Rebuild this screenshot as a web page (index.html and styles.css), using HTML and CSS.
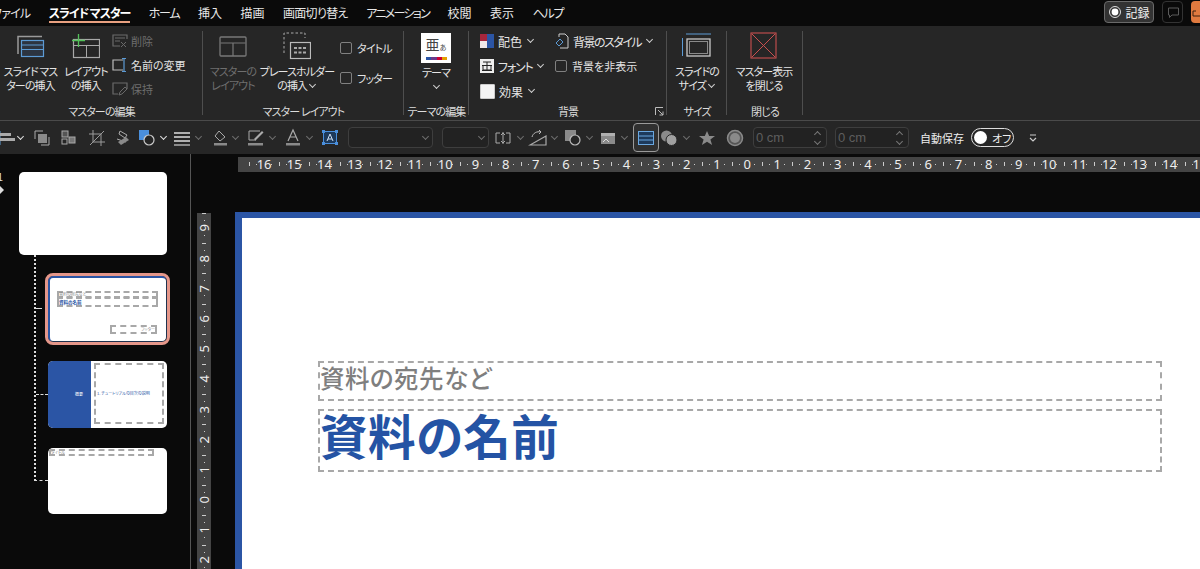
FILE: index.html
```html
<!DOCTYPE html>
<html lang="ja">
<head>
<meta charset="utf-8">
<title>スライド マスター</title>
<link rel="stylesheet" href="styles.css">
</head>
<body>
<div class="app">
  <header class="tabbar">
    <nav class="tabs">
      <span class="tab k0">ファイル</span><span class="tab active">スライド マスター</span><span class="tab k">ホーム</span><span class="tab">挿入</span><span class="tab">描画</span><span class="tab k2">画面切り替え</span><span class="tab k3">アニメーション</span><span class="tab">校閲</span><span class="tab">表示</span><span class="tab k">ヘルプ</span>
    </nav>
    <div class="tabactions">
      <span class="recbtn"><svg class="rec" width="14" height="14" viewBox="0 0 14 14"><circle cx="7" cy="7" r="5.5" fill="none" stroke="#ddd"/><circle cx="7" cy="7" r="3.4" fill="#fff"/></svg>記録</span>
      <span class="cmtbtn"><svg width="14" height="14" viewBox="0 0 14 14"><path d="M2.5 3h10v7H6l-2.5 2.5V10h-1z" fill="none" stroke="#5a5a5a"/></svg></span>
      <span class="sharebtn"><svg width="10" height="12" viewBox="0 0 10 12"><path d="M1 10V5h3M1 10h8" fill="none" stroke="#3a2010"/></svg></span>
    </div>
  </header>

  <section class="ribbon">
    <div class="group g1">
      <div class="gbody">
        <div class="big w52"><svg width="28" height="24" viewBox="0 0 28 24"><path d="M1 20V2.500h24" fill="none" stroke="#9a9a9a" stroke-width="1.500"/><rect x="4.500" y="6.500" width="22" height="16" fill="#2c3440" stroke="#5c9bd5" stroke-width="1.200"/><path d="M5 11h21M5 15.500h21" stroke="#5c9bd5"/></svg><span class="lbl">スライド マス<br>ターの挿入</span></div>
        <div class="big w56"><svg width="28" height="24" viewBox="0 0 28 24"><rect x="1.500" y="5.500" width="26" height="18" fill="none" stroke="#a8a8a8" stroke-width="1.200"/><path d="M2 11.500h25M14.500 12v11" stroke="#a8a8a8"/><path d="M6.500 0v13M0 6.500h13" stroke="#54c15a" stroke-width="1.300"/></svg><span class="lbl">レイアウト<br>の挿入</span></div>
        <div class="smallcol">
          <div class="sm dis"><svg width="16" height="14" viewBox="0 0 16 14"><path d="M15 5V1H1v11h7M3 4h10M3 7h5" fill="none" stroke="#6a6a6a" stroke-width="1.200"/><path d="M9 8l5 5M14 8l-5 5" stroke="#6a6a6a"/></svg>削除</div>
          <div class="sm"><svg width="16" height="14" viewBox="0 0 16 14"><path d="M11 2H1v10h10" fill="none" stroke="#bbb" stroke-width="1.200"/><path d="M12 0v14M10 .5h4M10 13.500h4" stroke="#5c9bd5" stroke-width="1.200" fill="none"/></svg>名前の変更</div>
          <div class="sm dis"><svg width="16" height="14" viewBox="0 0 16 14"><path d="M15 7V1H1v11h5" fill="none" stroke="#6a6a6a" stroke-width="1.200"/><path d="M7 13l1-3 5-5 2 2-5 5z" fill="none" stroke="#6a6a6a"/></svg>保持</div>
        </div>
      </div>
      <div class="gtitle">マスターの編集</div>
    </div>

    <div class="group g2">
      <div class="gbody">
        <div class="big w44 dis"><svg width="28" height="24" viewBox="0 0 28 24"><rect x="1" y="3" width="26" height="19" rx="1" fill="none" stroke="#787878" stroke-width="1.300"/><path d="M1.500 9h25M14 9v13" stroke="#787878" stroke-width="1.200"/></svg><span class="lbl">マスターの<br>レイアウト</span></div>
        <div class="big w72"><svg width="28" height="28" viewBox="0 0 28 28"><path d="M1 21V1h21v5" fill="none" stroke="#aaa" stroke-dasharray="2.500 2"/><rect x="7.500" y="10.500" width="20" height="16" fill="#2a2a2a" stroke="#bbb" stroke-width="1.200"/><path d="M11 15h3v2h-3zM15.500 15h3v2h-3zM20 15h3v2h-3zM11 19.500h3v2h-3zM15.500 19.500h3v2h-3zM20 19.500h3v2h-3z" fill="#aaa"/></svg><span class="lbl">プレースホルダー<br>の挿入 <i class="chev"></i></span></div>
        <div class="checks">
          <div class="ck"><span class="box"></span>タイトル</div>
          <div class="ck"><span class="box"></span>フッター</div>
        </div>
      </div>
      <div class="gtitle">マスター レイアウト</div>
    </div>

    <div class="group g3">
      <div class="gbody">
        <div class="big w64"><span class="theme"><span class="ja">亜<small>あ</small></span><span class="swatch"></span></span><span class="lbl">テーマ<br><i class="chev"></i></span></div>
      </div>
      <div class="gtitle">テーマの編集</div>
    </div>

    <div class="group g4">
      <div class="gbody bg">
        <div class="bgcol first">
          <div class="sm2"><span class="palette"></span>配色 <i class="chev"></i></div>
          <div class="sm2 ks"><svg class="fontic" width="14" height="14" viewBox="0 0 14 14"><rect width="14" height="14" fill="#eee"/><path d="M3 3h8M2 6.500h10M3 6.500v4.500h8V6.500M7 3v8M2 11.500h10" fill="none" stroke="#222"/></svg>フォント <i class="chev"></i></div>
          <div class="sm2"><span class="effect"></span>効果 <i class="chev"></i></div>
        </div>
        <div class="bgcol">
          <div class="sm2 ks2"><svg width="14" height="16" viewBox="0 0 14 16"><path d="M4 4V1h6l3 3v11H5" fill="none" stroke="#ccc"/><path d="M5 6L1 10l3 3 4-4z" fill="none" stroke="#5c9bd5"/></svg>背景のスタイル <i class="chev"></i></div>
          <div class="ck nar"><span class="box"></span>背景を非表示</div>
        </div>
      </div>
      <div class="gtitle">背景<svg class="launcher" width="9" height="9" viewBox="0 0 9 9"><path d="M.5 8V.5H8M3 3l5 5M8 4.500V8H4.500" fill="none" stroke="#bbb"/></svg></div>
    </div>

    <div class="group g5">
      <div class="gbody">
        <div class="big w58"><svg width="30" height="26" viewBox="0 0 30 26"><rect x="5" y="6" width="23" height="17" fill="none" stroke="#c8c8c8" stroke-width="1.300"/><rect x="7.500" y="8.500" width="18" height="12" fill="none" stroke="#8a8a8a"/><path d="M4 1h25M.5 5v18" stroke="#5c9bd5" fill="none"/></svg><span class="lbl">スライドの<br>サイズ <i class="chev"></i></span></div>
      </div>
      <div class="gtitle">サイズ</div>
    </div>

    <div class="group g6">
      <div class="gbody">
        <div class="big w74"><svg width="28" height="28" viewBox="0 0 28 28"><rect x="1" y="1" width="25" height="25" fill="none" stroke="#c94f4f" stroke-width="1.100"/><path d="M2 2l23 23M25 2L2 25" stroke="#c94f4f"/></svg><span class="lbl">マスター表示<br>を閉じる</span></div>
      </div>
      <div class="gtitle">閉じる</div>
    </div>
  </section>

  <section class="toolbar">
    <svg class="i" width="20" height="20" viewBox="0 0 20 20"><path d="M5 3v14" stroke="#5c9bd5"/><rect x="5" y="5" width="11" height="3" fill="#aaa"/><rect x="5" y="10" width="15" height="3" fill="#aaa"/></svg>
    <i class="c m1 br"></i>
    <svg class="i m8" width="20" height="20" viewBox="0 0 20 20"><path d="M3 11V3h8" fill="none" stroke="#aaa"/><rect x="6" y="6" width="9" height="9" fill="#8a8a8a"/><path d="M9 17h8V9" fill="none" stroke="#aaa"/></svg>
    <svg class="i m7" width="20" height="20" viewBox="0 0 20 20"><rect x="3" y="3" width="6" height="6" fill="#555" stroke="#aaa"/><rect x="10" y="9" width="6" height="6" fill="#777" stroke="#aaa"/><rect x="3" y="11" width="5" height="5" fill="none" stroke="#aaa"/></svg>
    <svg class="i m8" width="20" height="20" viewBox="0 0 20 20"><path d="M6 2v12h12M2 6h12v12M3 17L17 3" fill="none" stroke="#9a9a9a"/></svg>
    <svg class="i m6" width="20" height="20" viewBox="0 0 20 20"><path d="M7 3l7 4-2 3-6-4zM4 11l9 3" fill="none" stroke="#aaa"/><path d="M5 14l8-5 3 3-8 5z" fill="#8a8a8a"/></svg>
    <svg class="i m4" width="20" height="20" viewBox="0 0 20 20"><rect x="2" y="2" width="10" height="10" fill="#4a8fdc"/><circle cx="12" cy="12" r="5" fill="#262626" stroke="#ccc" stroke-width="1.200"/></svg>
    <i class="c m2 br"></i>
    <svg class="i m5" width="20" height="20" viewBox="0 0 20 20"><path d="M2 4h16v2H2zM2 8h16v2H2zM2 12h16v2H2z" fill="#b0b0b0"/><path d="M2 16h16v2H2z" fill="#8a8a8a"/></svg>
    <i class="c m2"></i>
    <svg class="i m8" width="20" height="20" viewBox="0 0 20 20"><path d="M9 3l6 6-5 4-5-5z" fill="none" stroke="#aaa"/><path d="M4 15h13v2.500H4z" fill="#8a8a8a"/></svg>
    <i class="c m1"></i>
    <svg class="i m7" width="20" height="20" viewBox="0 0 20 20"><path d="M3 3h11M3 3v9h7" fill="none" stroke="#aaa"/><path d="M8 11l8-8 1.500 1.500-8 8z" fill="#aaa"/><path d="M2 15h15v2.500H2z" fill="#8a8a8a"/></svg>
    <i class="c m2"></i>
    <svg class="i m7" width="20" height="20" viewBox="0 0 20 20"><path d="M5 13L10 2l5 11M7 9h6" fill="none" stroke="#aaa" stroke-width="1.200"/><path d="M3 15h14v2.500H3z" fill="#8a8a8a"/></svg>
    <i class="c m2"></i>
    <svg class="i m7" width="20" height="20" viewBox="0 0 20 20"><rect x="3.500" y="3.500" width="13" height="12" fill="#1d3a5c" stroke="#4a8fdc"/><path d="M7 13l3-7 3 7M8 11h4" fill="none" stroke="#cfe0f5"/><path d="M2 2h3v3H2zM15 2h3v3h-3zM2 14h3v3H2zM15 14h3v3h-3z" fill="#4a8fdc"/></svg>
    <span class="inp w85 m8"><i class="c"></i></span>
    <span class="inp w47 m9"><i class="c"></i></span>
    <svg class="i m4" width="20" height="20" viewBox="0 0 20 20"><path d="M7 5H3v10h4M13 5h4v10h-4" fill="none" stroke="#aaa"/><path d="M10 4v12M8 7l2-2 2 2M8 13l2 2 2-2" fill="none" stroke="#aaa"/></svg>
    <i class="c m3"></i>
    <svg class="i m4" width="20" height="20" viewBox="0 0 20 20"><path d="M2 17h16V8z" fill="none" stroke="#aaa" stroke-width="1.200"/><path d="M4 9c1-4 5-6 9-5M11 2l2 2-2 2" fill="none" stroke="#bbb"/></svg>
    <i class="c m2"></i>
    <svg class="i m5" width="20" height="20" viewBox="0 0 20 20"><rect x="2" y="2" width="11" height="11" fill="#8a8a8a"/><circle cx="12" cy="12" r="5" fill="#262626" stroke="#bbb" stroke-width="1.200"/></svg>
    <i class="c m2"></i>
    <svg class="i m5" width="20" height="20" viewBox="0 0 20 20"><rect x="3" y="5" width="14" height="11" fill="#8a8a8a"/><rect x="3" y="5" width="14" height="3" fill="#b0b0b0"/><path d="M5 14l3-3 3 3" fill="none" stroke="#ddd"/></svg>
    <i class="c m2"></i>
    <span class="sel m5"><svg width="16" height="14" viewBox="0 0 16 14"><rect x=".5" y=".5" width="15" height="13" fill="#1d3a5c" stroke="#6aa7e0"/><path d="M1 5h14M1 9h14" stroke="#6aa7e0"/></svg></span>
    <svg class="i" width="20" height="20" viewBox="0 0 20 20"><circle cx="7.500" cy="8" r="5.500" fill="#8a8a8a"/><circle cx="12.500" cy="12" r="5.500" fill="#a0a0a0" stroke="#262626"/></svg>
    <i class="c m3"></i>
    <svg class="i m7" width="20" height="20" viewBox="0 0 20 20"><path d="M10 3l2.200 5H18l-4.600 3.500 1.700 5.500-5.100-3.300L4.900 17l1.700-5.500L2 8h5.800z" fill="#8a8a8a"/></svg>
    <svg class="i m8" width="20" height="20" viewBox="0 0 20 20"><circle cx="10" cy="10" r="7.500" fill="#555" stroke="#8a8a8a" stroke-width="1.500"/><circle cx="10" cy="10" r="5" fill="#8a8a8a"/></svg>
    <span class="inp w74 m8 num">0 cm<b class="spin"></b></span>
    <span class="inp w74 m8 num">0 cm<b class="spin"></b></span>
    <span class="autosave m11">自動保存</span>
    <span class="toggle m6"><span class="knob"></span>オフ</span>
    <svg class="i m9" width="20" height="20" viewBox="0 0 20 20"><path d="M7 7h6M7 10l3 3 3-3" fill="none" stroke="#ccc" stroke-width="1.200"/></svg>
  </section>

  <main class="work">
    <aside class="pane">
      <div class="connectors"></div>
      <span class="num1">1</span>
      <svg class="star" width="6" height="8" viewBox="0 0 6 8"><path d="M0 2h2V0l4 4-4 4V6H0z" fill="#ddd"/></svg>
      <div class="thumb master"></div>
      <div class="layouts">
        <div class="thumb lay selected">
          <div class="top1">
            <div class="dash ph1"><span class="tiny gray">資料の宛先など</span></div>
            <div class="dash ph2"><span class="tiny blue strong">資料の名前</span></div>
          </div>
          <div class="dash foot1"><span class="tiny gray">フッター</span></div>
        </div>
        <div class="thumb lay two">
          <div class="side"><span class="tiny white">概要</span></div>
          <div class="dash body2"><span class="tiny blue">1. チュートリアルの目次の説明</span></div>
        </div>
        <div class="thumb lay three">
          <div class="dash title3"><span class="tiny gray">タイトル</span></div>
        </div>
      </div>
    </aside>
    <div class="stage">
      <div class="hruler">
        <span class="stub"></span><span class="t">16</span><span class="t">15</span><span class="t">14</span><span class="t">13</span><span class="t">12</span><span class="t">11</span><span class="t">10</span><span class="t">9</span><span class="t">8</span><span class="t">7</span><span class="t">6</span><span class="t">5</span><span class="t">4</span><span class="t">3</span><span class="t">2</span><span class="t">1</span><span class="t">0</span><span class="t">1</span><span class="t">2</span><span class="t">3</span><span class="t">4</span><span class="t">5</span><span class="t">6</span><span class="t">7</span><span class="t">8</span><span class="t">9</span><span class="t">10</span><span class="t">11</span><span class="t">12</span><span class="t">13</span><span class="t">14</span><span class="t">15</span>
      </div>
      <div class="lower">
        <div class="vruler">
          <span class="v"><b>9</b></span><span class="v"><b>8</b></span><span class="v"><b>7</b></span><span class="v"><b>6</b></span><span class="v"><b>5</b></span><span class="v"><b>4</b></span><span class="v"><b>3</b></span><span class="v"><b>2</b></span><span class="v"><b>1</b></span><span class="v"><b>0</b></span><span class="v"><b>1</b></span><span class="v"><b>2</b></span>
        </div>
        <div class="slide">
          <div class="ph sub"><span>資料の宛先など</span></div>
          <div class="ph name"><span>資料の名前</span></div>
        </div>
      </div>
    </div>
  </main>
</div>
</body>
</html>
```

FILE: styles.css
```css
* { box-sizing: border-box; }
html, body { margin: 0; padding: 0; height: 100%; background: #0a0a0a; overflow: hidden; }
body { font-family: "Noto Sans CJK JP", "Noto Sans", sans-serif; font-feature-settings: "palt"; color: #e6e6e6; }
.app { width: 1200px; height: 569px; display: flex; flex-direction: column; overflow: hidden; }

/* tab bar */
.tabbar { height: 26px; flex: none; display: flex; justify-content: space-between; background: #0a0a0a; }
.tabs { display: flex; margin-left: -8px; }
.tab { font-size: 12px; line-height: 25px; height: 26px; margin-right: 18.5px; color: #e8e8e8; white-space: nowrap; position: relative; }
.tab.k0 { letter-spacing: -.8px; }
.tab.k { letter-spacing: -1.2px; }
.tab.k2 { letter-spacing: -.7px; }
.tab.k3 { letter-spacing: -1.7px; }
.tab.active { font-weight: 700; color: #fff; letter-spacing: -1.100px; }
.tab.active::after { content: ""; position: absolute; left: 0; right: 0; bottom: 3px; height: 2px; background: #e8a080; }
.tabactions { display: flex; align-items: flex-start; padding-top: 1px; }
.recbtn { width: 50px; height: 22px; border: 1px solid #6a6a6a; border-radius: 4px; background: #333; font-size: 12px; display: flex; align-items: center; justify-content: center; gap: 3px; color: #eee; }
.cmtbtn { width: 21px; height: 22px; margin-left: 8px; border: 1px solid #333; border-radius: 4px; display: flex; align-items: center; justify-content: center; }
.sharebtn { width: 12px; height: 22px; margin-left: 8px; margin-right: -3px; border-radius: 4px; background: #e07a3f; display: flex; align-items: center; justify-content: center; }

/* ribbon */
.ribbon { height: 95px; flex: none; background: #262626; border-bottom: 1px solid #4a4a4a; display: flex; }
.group { height: 94px; display: flex; flex-direction: column; position: relative; }
.group::after { content: ""; position: absolute; right: 0; top: 5px; height: 84px; width: 1px; background: #4e4e4e; }
.g1 { width: 203px; } .g2 { width: 201px; } .g3 { width: 65px; } .g4 { width: 198px; } .g5 { width: 60px; } .g6 { width: 76px; }
.gbody { height: 76px; flex: none; display: flex; padding-top: 6px; }
.gtitle { height: 18px; font-size: 11px; line-height: 18px; letter-spacing: -.9px; text-align: center; color: #dcdcdc; position: relative; }
.g1 .gbody { padding-left: 3px; }
.g2 .gbody { padding-left: 8px; }
.big { display: flex; flex-direction: column; align-items: center; flex: none; }
.big svg { height: 28px; margin-bottom: 4px; margin-top: 0; }
.lbl { font-size: 11px; line-height: 14px; letter-spacing: -.9px; text-align: center; white-space: nowrap; color: #e4e4e4; }
.w52 { width: 55px; } .w56 { width: 56px; } .w44 { width: 44px; } .w72 { width: 84px; } .w64 { width: 64px; } .w58 { width: 60px; } .w74 { width: 76px; }
.dis, .dis .lbl { color: #6e6e6e; }
.smallcol { display: flex; flex-direction: column; margin: -3px 0 0 -2px; }
.sm { height: 24px; display: flex; align-items: center; gap: 3px; font-size: 11px; white-space: nowrap; color: #e4e4e4; }
.sm.dis { color: #6e6e6e; }
.checks { display: flex; flex-direction: column; gap: 18px; margin-left: 1px; padding-top: 10px; }
.ck { height: 12px; display: flex; align-items: center; gap: 5px; font-size: 11px; letter-spacing: -.8px; white-space: nowrap; color: #e4e4e4; }
.box { width: 12px; height: 12px; border: 1px solid #808080; border-radius: 2px; flex: none; }
.chev, .c { display: inline-block; width: 8px; height: 8px; flex: none; position: relative; }
.chev::before, .c::before { content: ""; position: absolute; left: 1.500px; top: 0; width: 4px; height: 4px; border-right: 1px solid #cfcfcf; border-bottom: 1px solid #cfcfcf; transform: rotate(45deg); }
.theme { width: 30px; height: 30px; background: #fff; display: flex; flex-direction: column; align-items: center; color: #444; margin-bottom: 2px; margin-top: 1px; }
.ja { font-size: 14px; line-height: 19px; padding-top: 2px; }
.ja small { font-size: 7px; }
.swatch { width: 21px; height: 3px; background: linear-gradient(90deg, #2b55a5 25%, #6a3a8a 25% 50%, #c03 50% 75%, #e5a000 75%); }
.bg { padding-left: 11px; gap: 18px; padding-top: 7px; }
.bgcol { display: flex; flex-direction: column; gap: 9px; }
.first { width: 57px; flex: none; }
.sm2 { height: 16px; display: flex; align-items: center; gap: 4px; font-size: 12px; white-space: nowrap; color: #e4e4e4; }
.ks { letter-spacing: -1.2px; }
.ks2 { letter-spacing: -1.5px; }
.ks svg, .ks2 svg { flex: none; }
.ck.nar { height: 16px; font-size: 11px; gap: 5px; letter-spacing: 0; }
.palette { width: 14px; height: 14px; flex: none; background: linear-gradient(90deg, #a6263c 50%, #2b55a5 50%); position: relative; }
.palette::after { content: ""; position: absolute; left: 0; bottom: 0; width: 7px; height: 7px; background: #f0e8e8; }
.fontic { width: 14px; height: 14px; }
.effect { width: 15px; height: 15px; flex: none; background: #f4f4f4; border: 1px solid #ccc; border-radius: 1px; }
.launcher { position: absolute; right: 3px; top: 5px; }

/* toolbar */
.toolbar { height: 33px; flex: none; background: #262626; display: flex; align-items: center; margin-left: -5px; width: 1205px; }
.toolbar > svg, .toolbar > span, .toolbar > i { flex: none; }
.i { width: 20px; height: 20px; display: block; }
.c { width: 8px; height: 8px; }
.c::before { border-color: #6e6e6e; }
.br.c::before { border-color: #e0e0e0; }
.m1 { margin-left: 1px; } .m2 { margin-left: 2px; } .m3 { margin-left: 3px; } .m4 { margin-left: 4px; } .m5 { margin-left: 5px; } .m6 { margin-left: 6px; } .m7 { margin-left: 7px; } .m8 { margin-left: 8px; } .m9 { margin-left: 9px; } .m11 { margin-left: 11px; }
.inp { height: 21px; border: 1px solid #3e3e3e; border-radius: 4px; background: #222; display: flex; align-items: center; justify-content: flex-end; padding-right: 3px; position: relative; }
.w85 { width: 85px; } .w47 { width: 47px; } .w74 { width: 74px; }
.num { justify-content: flex-start; padding-left: 2px; font-family: "Liberation Sans", sans-serif; font-size: 13px; color: #5e5e5e; }
.spin { position: absolute; right: 4px; top: 2px; width: 8px; height: 15px; }
.spin::before, .spin::after { content: ""; position: absolute; left: 1px; width: 4px; height: 4px; border-left: 1px solid #777; border-top: 1px solid #777; transform: rotate(45deg); }
.spin::before { top: 2px; }
.spin::after { top: 9px; transform: rotate(225deg); }
.sel { width: 26px; height: 29px; border: 1px solid #9a9a9a; border-radius: 4px; background: #303030; display: flex; align-items: center; justify-content: center; }
.autosave { font-size: 11px; width: 45px; white-space: nowrap; color: #eee; }
.toggle { width: 43px; height: 19px; border: 1px solid #ddd; border-radius: 10px; display: flex; align-items: center; gap: 5px; padding-left: 2px; font-size: 11px; color: #eee; }
.knob { width: 13px; height: 13px; border-radius: 50%; background: #fff; }

/* work area */
.work { flex: 1; min-height: 0; display: flex; background: #0a0a0a; }
.pane { width: 191px; flex: none; border-right: 1px solid #555; padding: 18px 0 0 19px; position: relative; }
.num1 { position: absolute; left: -3px; top: 15px; font-size: 11px; color: #ddd; line-height: 14px; }
.star { position: absolute; left: -2px; top: 32px; }
.thumb { background: #fff; border-radius: 5px; }
.master { width: 148px; height: 83px; }
.layouts { display: flex; flex-direction: column; margin-left: 29px; padding-top: 21px; gap: 19px; }
.lay { width: 119px; height: 66px; position: relative; display: flex; }
.selected { border-top: 2px solid #2b55a5; border-left: 2px solid #2b55a5; outline: 3px solid #e5978a; border-right: 1px solid #20324f; border-bottom: 1px solid #20324f; }
.two { height: 67px; }
.three { margin-top: 1px; }
.side { width: 43px; background: #2b55a5; border-radius: 5px 0 0 5px; display: flex; align-items: center; justify-content: flex-end; padding-right: 8px; }
.dash { border: 2px dashed #a8a8a8; display: flex; flex-direction: column; }
.top1 { position: absolute; left: 7px; top: 13px; width: 101px; display: flex; flex-direction: column; }
.ph1 { height: 7px; justify-content: center; }
.ph2 { height: 10px; margin-top: -1px; justify-content: center; }
.foot1 { position: absolute; right: 9px; top: 47px; width: 47px; height: 9px; align-items: flex-end; justify-content: center; }
.body2 { width: 70px; height: 61px; margin: 2px 0 0 3px; justify-content: center; padding-left: 1px; }
.title3 { width: 105px; height: 7px; margin: 1px 0 0 1px; justify-content: center; }
.tiny { font-size: 4px; line-height: 3px; white-space: nowrap; }
.strong { font-weight: 700; font-size: 4.500px; }
.gray { color: #888; } .blue { color: #2b55a5; } .white { color: #fff; }
.connectors { position: absolute; left: 34px; top: 101px; width: 14px; height: 226px; border-left: 2px dotted #ddd; border-bottom: 1px dashed #ddd; }
.connectors::before { content: ""; position: absolute; left: 0; top: 53px; width: 6px; border-top: 1px dashed #ddd; }
.connectors::after { content: ""; position: absolute; left: 0; top: 139px; width: 12px; border-top: 1px dashed #ddd; }

.stage { flex: 1; min-width: 0; display: flex; flex-direction: column; padding-top: 3px; overflow: hidden; }
.hruler { height: 15px; flex: none; margin-left: 47px; background: #444; display: flex; color: #eee; font-family: "Noto Sans", sans-serif; white-space: nowrap; }
.stub { width: 11px; flex: none; }
.t, .v { flex: none; display: flex; align-items: center; justify-content: center; font-size: 13px; line-height: 15px;
  background-image: linear-gradient(#ccc, #ccc), linear-gradient(#ccc, #ccc), linear-gradient(#ccc, #ccc); background-repeat: no-repeat; }
.t { width: 30.2px; height: 15px; background-size: 1px 1px, 1px 1px, 1px 4px; background-position: 7px 7px, 22px 7px, 0 5px; }
.lower { flex: 1; min-height: 0; display: flex; padding: 40px 0 0 6px; }
.vruler { width: 14px; flex: none; margin-top: 1px; background: #444; display: flex; flex-direction: column; color: #eee; font-family: "Noto Sans", sans-serif; }
.v { width: 14px; height: 30.2px; background-size: 1px 1px, 1px 1px, 4px 1px; background-position: 7px 7px, 7px 22px, 5px 0; }
.v b { font-weight: 400; writing-mode: vertical-rl; transform: rotate(180deg); line-height: 14px; }
.slide { flex: 1; min-width: 0; margin-left: 24px; background: #fff; border-top: 6px solid #2b55a5; border-left: 7px solid #2b55a5; padding: 143px 38px 0 76px; display: flex; flex-direction: column; gap: 8px; }
.ph { border: 2px dashed #a8a8a8; display: flex; align-items: center; flex: none; white-space: nowrap; }
.sub { height: 40px; font-size: 24.500px; font-weight: 500; color: #7f7f7f; padding-bottom: 7px; letter-spacing: .5px; }
.name { height: 63px; font-size: 47.500px; font-weight: 700; color: #2453a4; padding-bottom: 13px; letter-spacing: .5px; }
```
